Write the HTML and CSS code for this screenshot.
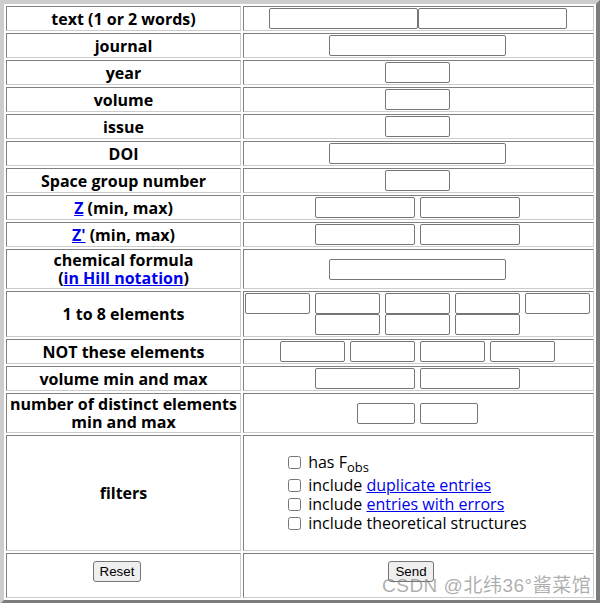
FILE: index.html
```html
<!DOCTYPE html>
<html>
<head>
    <meta charset="UTF-8">
    <title>Search</title>
    <link rel="stylesheet" href="styles.css">
</head>
<body>
<div class="page">
    <form>
    <table class="search">
        <tr>
            <td class="label">text (1 or 2 words)</td>
            <td class="value"><div class="fields tight"><input class="fld w-text" type="text"><input class="fld w-text" type="text"></div></td>
        </tr>
        <tr>
            <td class="label">journal</td>
            <td class="value"><div class="fields"><input class="fld w-long" type="text"></div></td>
        </tr>
        <tr>
            <td class="label">year</td>
            <td class="value"><div class="fields"><input class="fld w-short" type="text"></div></td>
        </tr>
        <tr>
            <td class="label">volume</td>
            <td class="value"><div class="fields"><input class="fld w-short" type="text"></div></td>
        </tr>
        <tr>
            <td class="label">issue</td>
            <td class="value"><div class="fields"><input class="fld w-short" type="text"></div></td>
        </tr>
        <tr>
            <td class="label">DOI</td>
            <td class="value"><div class="fields"><input class="fld w-long" type="text"></div></td>
        </tr>
        <tr>
            <td class="label">Space group number</td>
            <td class="value"><div class="fields"><input class="fld w-short" type="text"></div></td>
        </tr>
        <tr>
            <td class="label"><a href="#">Z</a> (min, max)</td>
            <td class="value"><div class="fields"><input class="fld w-range" type="text"><input class="fld w-range" type="text"></div></td>
        </tr>
        <tr>
            <td class="label"><a href="#">Z'</a> (min, max)</td>
            <td class="value"><div class="fields"><input class="fld w-range" type="text"><input class="fld w-range" type="text"></div></td>
        </tr>
        <tr>
            <td class="label">chemical formula<br>(<a href="#">in Hill notation</a>)</td>
            <td class="value"><div class="fields"><input class="fld w-long" type="text"></div></td>
        </tr>
        <tr>
            <td class="label">1 to 8 elements</td>
            <td class="value">
                <div class="fields">
                    <input class="fld w-short" type="text"><input class="fld w-short" type="text"><input class="fld w-short" type="text"><input class="fld w-short" type="text"><input class="fld w-short" type="text"><input class="fld w-short" type="text"><input class="fld w-short" type="text"><input class="fld w-short" type="text">
                </div>
            </td>
        </tr>
        <tr>
            <td class="label">NOT these elements</td>
            <td class="value">
                <div class="fields">
                    <input class="fld w-short" type="text"><input class="fld w-short" type="text"><input class="fld w-short" type="text"><input class="fld w-short" type="text">
                </div>
            </td>
        </tr>
        <tr>
            <td class="label">volume min and max</td>
            <td class="value"><div class="fields"><input class="fld w-range" type="text"><input class="fld w-range" type="text"></div></td>
        </tr>
        <tr>
            <td class="label">number of distinct elements<br>min and max</td>
            <td class="value"><div class="fields"><input class="fld w-tiny" type="text"><input class="fld w-tiny" type="text"></div></td>
        </tr>
        <tr>
            <td class="label">filters</td>
            <td class="value">
                <ul class="filters">
                    <li><input class="chk" type="checkbox"> has F<sub>obs</sub></li>
                    <li><input class="chk" type="checkbox"> include <a href="#">duplicate entries</a></li>
                    <li><input class="chk" type="checkbox"> include <a href="#">entries with errors</a></li>
                    <li><input class="chk" type="checkbox"> include theoretical structures</li>
                </ul>
            </td>
        </tr>
        <tr>
            <td class="btn-cell"><button class="btn" type="reset">Reset</button></td>
            <td class="btn-cell send"><button class="btn" type="button">Send</button></td>
        </tr>
    </table>
    </form>
    <div class="mark">CSDN @北纬36°酱菜馆</div>
</div>
</body>
</html>
```

FILE: styles.css
```css
*{ margin: 0; padding: 0;}
body{
    font-family: "Open Sans", "Noto Sans", sans-serif;
    background: #fff;
}
.page{
    position: relative;
    width: 600px;
}
.search{
    width: 600px;
    table-layout: fixed;
    border-collapse: separate;
    border-spacing: 2px;
    border: 4px solid;
    border-color: #cdcdcd #7c7c7c #7c7c7c #cdcdcd;
    background: #fff;
}
.search td{
    border: 1px solid;
    border-color: #808080 #cccccc #cccccc #808080;
    padding: 1px;
    text-align: center;
    vertical-align: middle;
}
.search td.label{
    width: 231px;
    font-size: 16px;
    font-weight: bold;
    line-height: 18px;
    color: #000;
}
.search td.value{
    padding: 1px 2px 1px 0;
}
.search a{
    color: #0000ee;
}
.fields{
    display: flex;
    flex-wrap: wrap;
    justify-content: center;
    column-gap: 5px;
}
.fields.tight{
    column-gap: 0;
}
.fld{
    box-sizing: border-box;
    height: 21px;
    padding: 1px 2px;
    border: 1px solid #767676;
    border-radius: 2px;
    background: #fff;
    font: 13.33px "Liberation Sans", Arial, sans-serif;
}
.w-text{ width: 149px;}
.w-long{ width: 177px;}
.w-range{ width: 100px;}
.w-short{ width: 65px;}
.w-tiny{ width: 58px;}
.filters{
    list-style: none;
    margin: 16px 0;
    padding-left: 40px;
    text-align: left;
    font-size: 16px;
    line-height: 19px;
}
.chk{
    width: 13px;
    height: 13px;
    margin: 3px 3px 3px 4px;
    vertical-align: -1px;
}
.filters sub{
    font-size: 13px;
    line-height: 17px;
}
.search td.btn-cell{
    vertical-align: top;
    padding: 7px 14px 15px 1px;
}
.search td.btn-cell.send{
    padding-right: 16px;
}
.btn{
    display: block;
    box-sizing: border-box;
    height: 21px;
    margin: 0 auto;
    padding: 1px 6px;
    border: 1px solid #767676;
    border-radius: 3px;
    background: #efefef;
    color: #000;
    font: 13.33px "Liberation Sans", Arial, sans-serif;
}
.mark{
    position: absolute;
    left: 382px;
    top: 570px;
    font: 19px "Liberation Sans", "Noto Sans CJK SC", sans-serif;
    letter-spacing: 0.5px;
    color: rgba(120, 120, 120, 0.6);
    white-space: nowrap;
}
```
